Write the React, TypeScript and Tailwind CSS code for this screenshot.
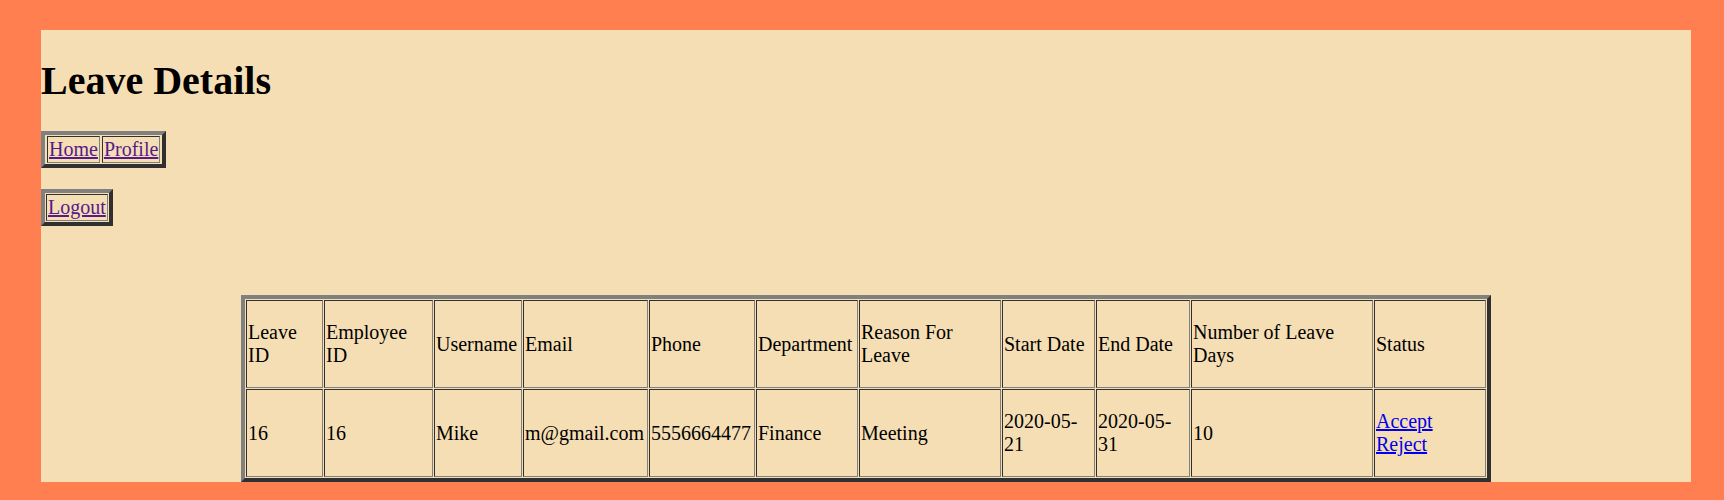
import React from "react";

const cell =
  "border border-solid border-t-[#303030] border-l-[#303030] border-r-[#808080] border-b-[#808080] p-px align-middle text-left font-normal";
const frame =
  "border-separate border-[4px] border-solid border-t-[#808080] border-l-[#808080] border-r-[#303030] border-b-[#303030]";
const navTbl = `${frame} border-spacing-x-[2px] border-spacing-y-[1px]`;
const tbl = `${frame} border-spacing-[1px]`;

const headers: [string, string][] = [
  ["Leave ID", "w-[77px]"],
  ["Employee ID", "w-[109px]"],
  ["Username", "w-[88px]"],
  ["Email", "w-[125px]"],
  ["Phone", "w-[106px]"],
  ["Department", "w-[102px]"],
  ["Reason For Leave", "w-[142px]"],
  ["Start Date", "w-[93px]"],
  ["End Date", "w-[94px]"],
  ["Number of Leave Days", "w-[182px]"],
  ["Status", "w-[112px]"],
];

const row = [
  "16",
  "16",
  "Mike",
  "m@gmail.com",
  "5556664477",
  "Finance",
  "Meeting",
  "2020-05-21",
  "2020-05-31",
  "10",
];

export default function App() {
  return (
    <div className="min-h-[500px] bg-[#ff7f50] pt-[30px] pl-[41px] font-['Liberation_Serif',serif] text-[20px] leading-[23px] text-black">
      <div className="w-[1650px] bg-[#f5deb3] pt-[28px]">
        <h1 className="m-0 text-[40px] leading-[46px] font-bold">Leave Details</h1>
        <table className={`${navTbl} mt-[27px]`}>
          <tbody>
            <tr>
              <td className={cell}>
                <a href="#" className="text-[#551a8b] underline">Home</a>
              </td>
              <td className={cell}>
                <a href="#" className="text-[#551a8b] underline">Profile</a>
              </td>
            </tr>
          </tbody>
        </table>
        <table className={`${tbl} mt-[21px]`}>
          <tbody>
            <tr>
              <td className={cell}>
                <a href="#" className="text-[#551a8b] underline">Logout</a>
              </td>
            </tr>
          </tbody>
        </table>
        <table className={`${tbl} mt-[69px] ml-[200px] w-[1250px] h-[187px] table-fixed`}>
          <tbody>
            <tr>
              {headers.map(([h, w]) => (
                <td key={h} className={`${cell} ${w} h-[88px]`}>
                  {h}
                </td>
              ))}
            </tr>
            <tr>
              {row.map((v, i) => (
                <td key={i} className={`${cell} h-[88px] break-words`}>
                  {v}
                </td>
              ))}
              <td className={`${cell} h-[88px]`}>
                <a href="#" className="text-[#0000ee] underline">Accept</a>
                <br />
                <a href="#" className="text-[#0000ee] underline">Reject</a>
              </td>
            </tr>
          </tbody>
        </table>
      </div>
    </div>
  );
}
